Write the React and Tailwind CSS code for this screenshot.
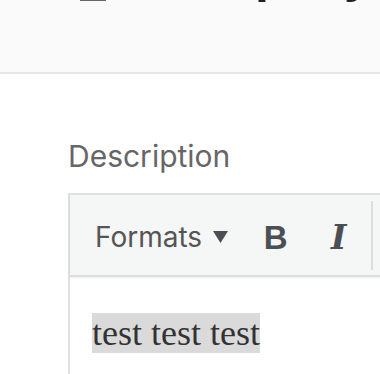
import React from 'react';

function TriangleDown() {
  return (
    <svg width="15" height="12" viewBox="0 0 15 12" className="fill-[#4b4f54]">
      <path d="M0 0 H15 L7.5 12 Z" />
    </svg>
  );
}

function ToolButton({ children, className = '' }) {
  return (
    <div className={`flex items-center justify-center ${className}`}>
      {children}
    </div>
  );
}

export default function App() {
  return (
    <div className="w-[380px] h-[374px] overflow-hidden bg-white font-['Inter',sans-serif]">
      {/* page header, only its bottom edge is in view */}
      <div className="h-[74px] bg-[#fafafa] border-b-2 border-[#e6e6e6] overflow-hidden">
        <div className="flex items-start pl-[80px] -mt-[50px]">
          <div className="w-[26px] h-[51px] border-b-2 border-[#666]" />
          <h1 className="ml-[38px] text-[50px] leading-[50px] font-bold text-[#222] whitespace-nowrap font-['Liberation_Sans',sans-serif]">
            Company
          </h1>
        </div>
      </div>

      <div className="pl-[68px] pt-[64px]">
        <label className="block text-[30px] leading-[36px] text-[#666] font-['Inter',sans-serif]">
          Description
        </label>

        <div className="mt-[19px] w-[600px] border-2 border-[#e0e0e0] bg-white">
          {/* toolbar */}
          <div className="flex items-center h-[82px] bg-[#f5f6f6] border-b-2 border-[#dcdcdc] shadow-[0_1px_2px_rgba(0,0,0,0.08)]">
            <ToolButton className="pl-[25px] gap-[11px] pt-[4px]">
              <span className="text-[28px] leading-none text-[#555] font-['Inter',sans-serif]">Formats</span>
              <TriangleDown />
            </ToolButton>
            <ToolButton className="ml-[37px] w-[21px] pt-[4px]">
              <span className="text-[33px] leading-none font-bold text-[#4b4f54] font-['Liberation_Sans',sans-serif]">B</span>
            </ToolButton>
            <ToolButton className="ml-[41px] w-[23px] pt-[4px]">
              <span className="text-[33px] leading-none font-bold italic text-[#4b4f54] font-['DejaVu_Serif',serif]">I</span>
            </ToolButton>
            <div className="ml-[21px] w-[2px] h-[69px] bg-[#dddddd]" />
          </div>

          {/* content */}
          <div className="pl-[22px] pt-[38px] h-[120px]">
            <span className="bg-[#dadada] text-[36px] leading-none text-[#333] font-['Liberation_Serif',serif]">
              test test test
            </span>
          </div>
        </div>
      </div>
    </div>
  );
}
